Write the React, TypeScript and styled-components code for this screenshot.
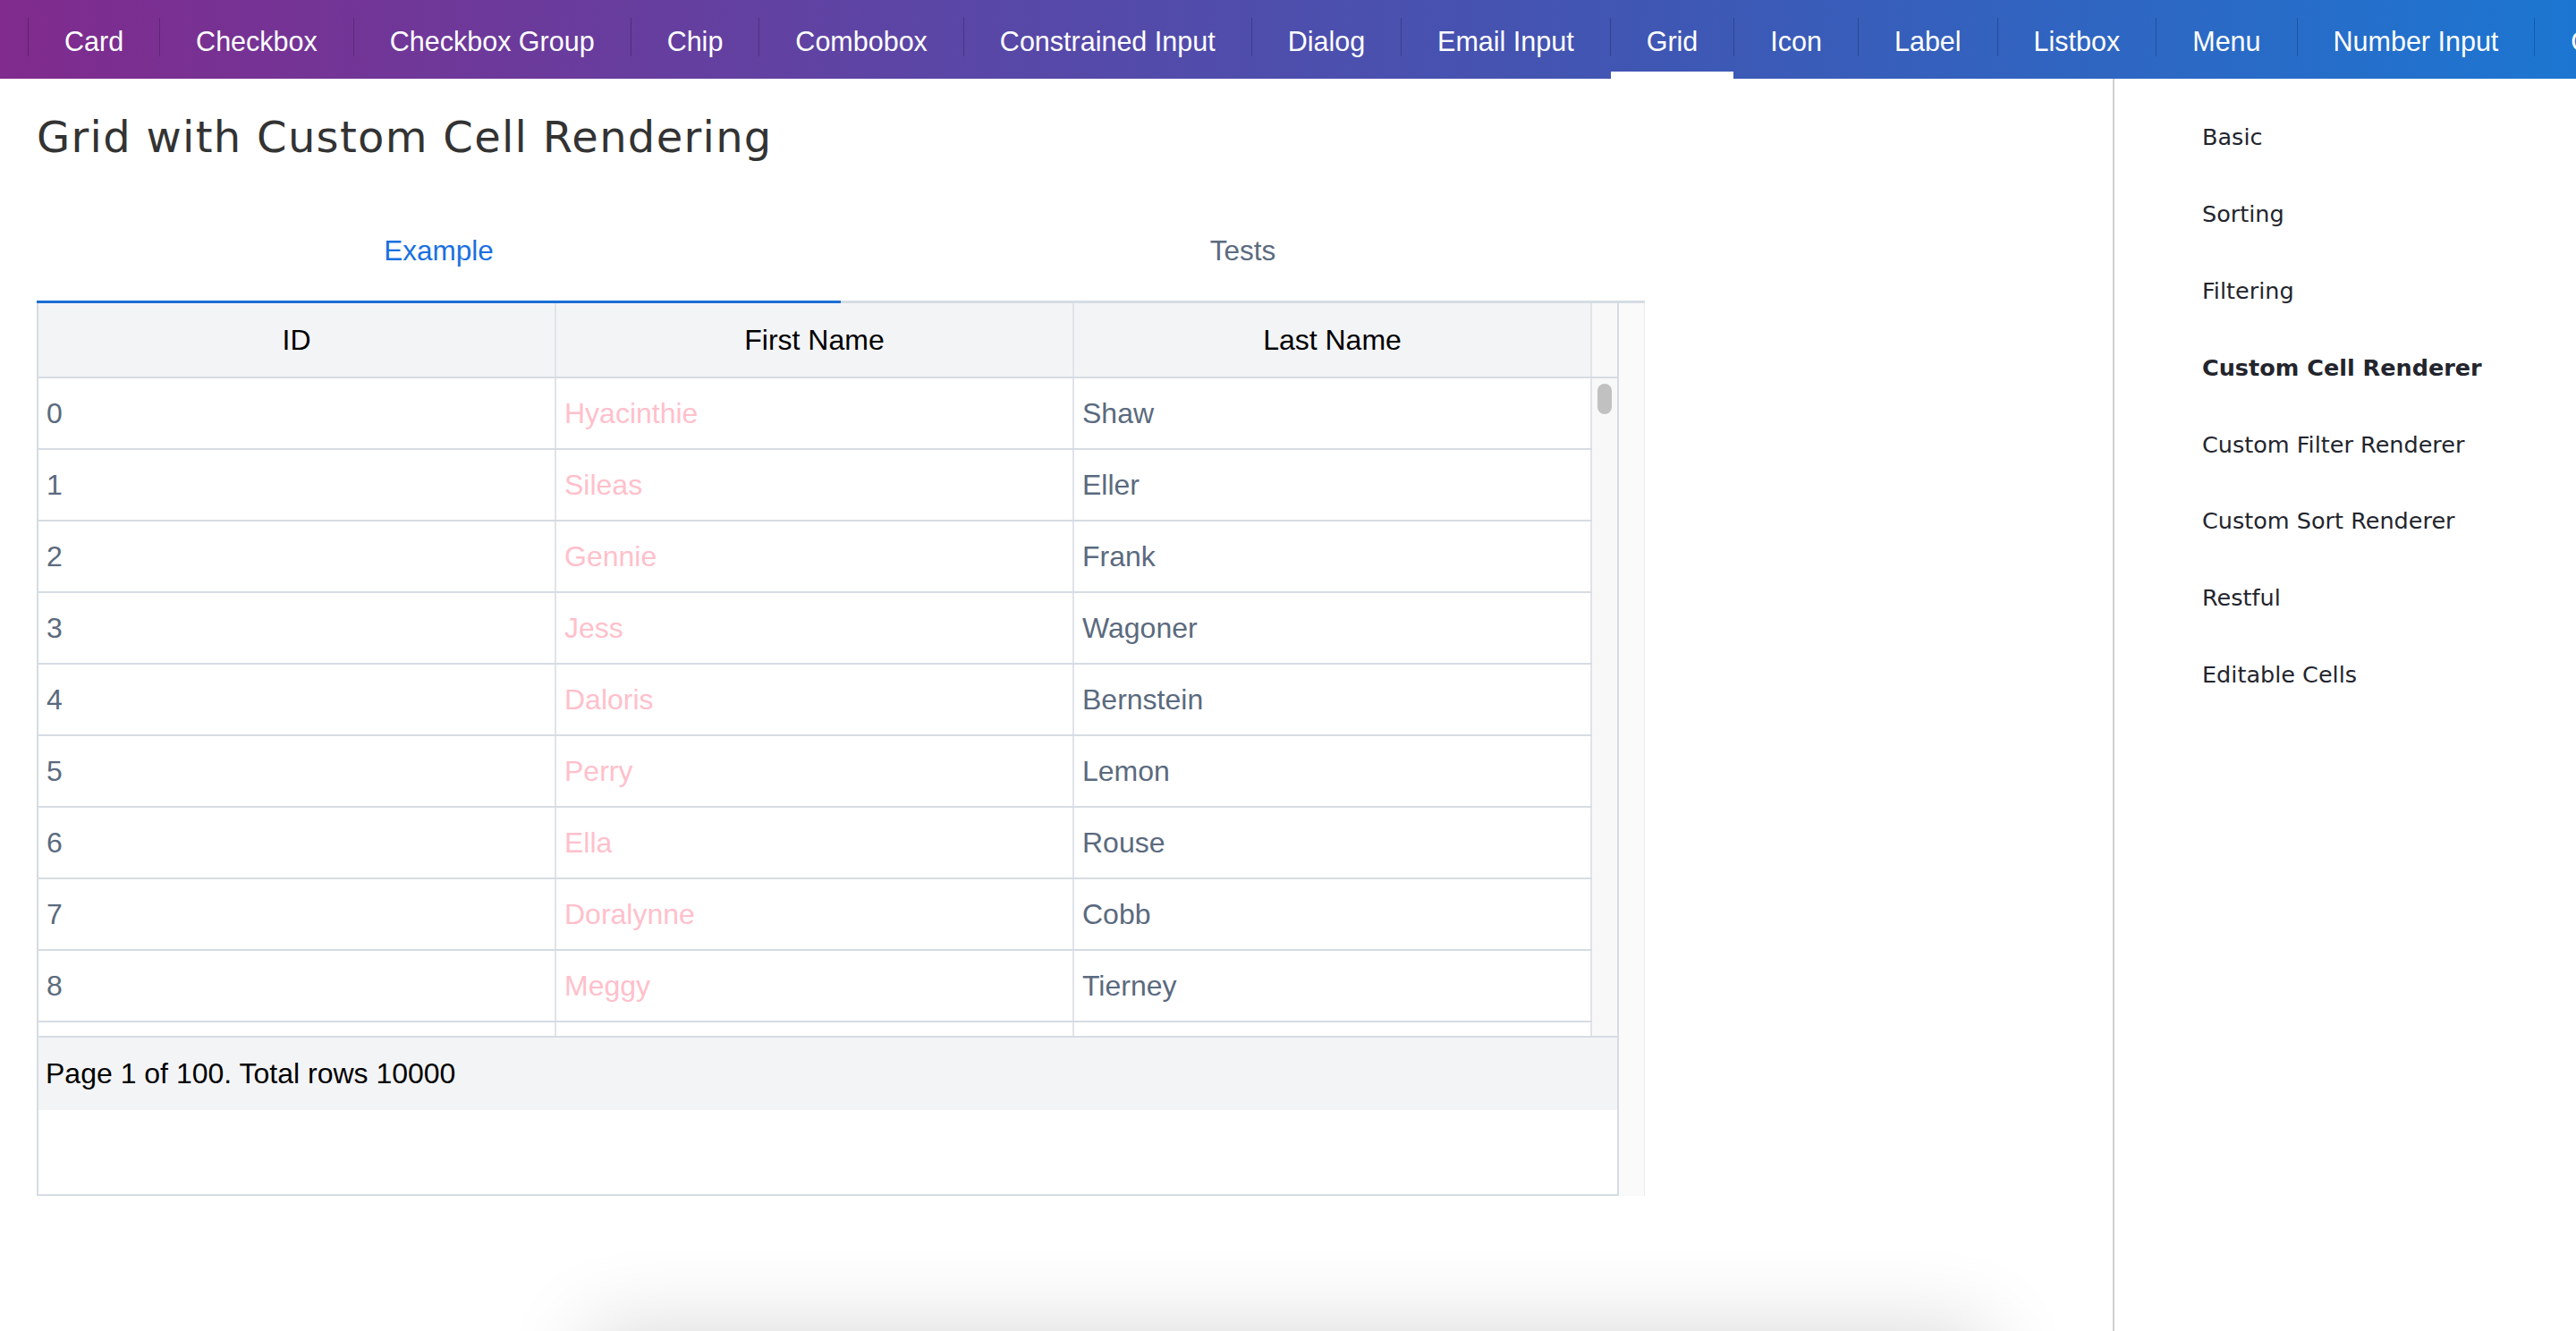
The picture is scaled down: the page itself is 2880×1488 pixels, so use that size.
import React from "react";
import styled, { createGlobalStyle } from "styled-components";

type Person = { id: number; first: string; last: string };

const navItems = [
  "Card",
  "Checkbox",
  "Checkbox Group",
  "Chip",
  "Combobox",
  "Constrained Input",
  "Dialog",
  "Email Input",
  "Grid",
  "Icon",
  "Label",
  "Listbox",
  "Menu",
  "Number Input",
  "Option",
];

const sideLinks = [
  "Basic",
  "Sorting",
  "Filtering",
  "Custom Cell Renderer",
  "Custom Filter Renderer",
  "Custom Sort Renderer",
  "Restful",
  "Editable Cells",
];

const people: Person[] = [
  { id: 0, first: "Hyacinthie", last: "Shaw" },
  { id: 1, first: "Sileas", last: "Eller" },
  { id: 2, first: "Gennie", last: "Frank" },
  { id: 3, first: "Jess", last: "Wagoner" },
  { id: 4, first: "Daloris", last: "Bernstein" },
  { id: 5, first: "Perry", last: "Lemon" },
  { id: 6, first: "Ella", last: "Rouse" },
  { id: 7, first: "Doralynne", last: "Cobb" },
  { id: 8, first: "Meggy", last: "Tierney" },
];

const App = () => {
  return (
    <>
      <GlobalStyle />
      <SPage>
        <SNav>
          {navItems.map((item) => (
            <React.Fragment key={item}>
              <SNavSep />
              <SNavItem $active={item === "Grid"}>{item}</SNavItem>
            </React.Fragment>
          ))}
        </SNav>

        <SBody>
          <SMain>
            <STitle>Grid with Custom Cell Rendering</STitle>

            <STabList>
              <STab $active>Example</STab>
              <STab>Tests</STab>
            </STabList>

            <STabPanel>
              <SGrid>
                <SHeaderRow>
                  <SHeaderCell>ID</SHeaderCell>
                  <SHeaderCell>First Name</SHeaderCell>
                  <SHeaderCell>Last Name</SHeaderCell>
                  <SHeaderGutter />
                </SHeaderRow>

                <SGridBody>
                  <SRows>
                    {people.map((p) => (
                      <SRow key={p.id}>
                        <SCell>{p.id}</SCell>
                        <SCell $pink>{p.first}</SCell>
                        <SCell>{p.last}</SCell>
                      </SRow>
                    ))}
                    {/* next row is only just scrolled into view */}
                    <SRow>
                      <SCell />
                      <SCell />
                      <SCell />
                    </SRow>
                  </SRows>
                  <STrack>
                    <SThumb />
                  </STrack>
                </SGridBody>

                <SGridFooter>Page 1 of 100. Total rows 10000</SGridFooter>
                <SGridBlank />
              </SGrid>
              <SPanelTrack />
            </STabPanel>
          </SMain>

          <SSide>
            {sideLinks.map((link) => (
              <SSideLink key={link} $current={link === "Custom Cell Renderer"}>
                {link}
              </SSideLink>
            ))}
          </SSide>
        </SBody>
      </SPage>
      <SBottomSheet />
    </>
  );
};

const GlobalStyle = createGlobalStyle`
  html, body {
    margin: 0;
    padding: 0;
    height: 100%;
    overflow: hidden;
    background: #fff;
  }
  body {
    font-family: "Liberation Sans", Arial, sans-serif;
  }
  #root {
    height: 100%;
  }
`;

const SPage = styled.div`
  height: 100vh;
  display: flex;
  flex-direction: column;
`;

const SNav = styled.nav`
  height: 88px;
  flex-shrink: 0;
  display: flex;
  align-items: center;
  padding-left: 31px;
  overflow: hidden;
  white-space: nowrap;
  background: linear-gradient(90deg, #802b8d 0%, #5c45a5 35%, #3f57b4 65%, #1c76d1 100%);
`;

const SNavSep = styled.span`
  flex-shrink: 0;
  width: 1px;
  height: 43px;
  margin-bottom: 5px;
  background: rgba(0, 0, 0, 0.22);
`;

const SNavItem = styled.a<{ $active?: boolean }>`
  flex-shrink: 0;
  height: 88px;
  box-sizing: border-box;
  display: flex;
  align-items: center;
  padding: 4px 40px 0;
  font-size: 30.5px;
  color: #fff;
  box-shadow: ${(p) => (p.$active ? "inset 0 -8px 0 #fff" : "none")};
`;

const SBody = styled.div`
  flex: 1;
  display: flex;
  min-height: 0;
`;

const SMain = styled.main`
  flex: 1;
  padding-left: 41px;
`;

const STitle = styled.h1`
  margin: 36px 0 0;
  font-family: "DejaVu Sans", sans-serif;
  font-size: 48px;
  line-height: 58px;
  font-weight: 400;
  letter-spacing: 1.3px;
  color: #333;
`;

const STabList = styled.div`
  margin-top: 43px;
  width: 1798px;
  display: grid;
  grid-template-columns: 1fr 1fr;
`;

const STab = styled.button<{ $active?: boolean }>`
  height: 114px;
  padding: 0;
  border: none;
  border-bottom: 3px solid ${(p) => (p.$active ? "#1a6fd6" : "#d6dce3")};
  background: none;
  font-family: "Liberation Sans", Arial, sans-serif;
  font-size: 31.5px;
  color: ${(p) => (p.$active ? "#1a70e0" : "#5c6b7f")};
`;

const STabPanel = styled.div`
  width: 1798px;
  display: flex;
`;

const SGrid = styled.div`
  flex: 1;
  display: flex;
  flex-direction: column;
  border: 2px solid #d6dce3;
  border-top: none;
`;

const SHeaderRow = styled.div`
  height: 82px;
  display: grid;
  grid-template-columns: repeat(3, 1fr) 28px;
  background: #f3f4f6;
  border-bottom: 2px solid #d6dce3;
`;

const SHeaderCell = styled.div`
  display: flex;
  align-items: center;
  justify-content: center;
  border-right: 2px solid #e0e4e9;
  font-size: 32px;
  color: #000;
`;

const SHeaderGutter = styled.div`
  background: #f8f8f8;
`;

const SGridBody = styled.div`
  height: 735px;
  display: flex;
  overflow: hidden;
`;

const SRows = styled.div`
  flex: 1;
  display: flex;
  flex-direction: column;
  overflow: hidden;
`;

const SRow = styled.div`
  flex-shrink: 0;
  height: 80px;
  box-sizing: border-box;
  display: grid;
  grid-template-columns: repeat(3, 1fr);
  border-bottom: 2px solid #d6dce3;
`;

const SCell = styled.div<{ $pink?: boolean }>`
  display: flex;
  align-items: center;
  padding-left: 9px;
  border-right: 2px solid #e0e4e9;
  font-size: 32px;
  color: ${(p) => (p.$pink ? "#ffc0cb" : "#5b6a7e")};
`;

const STrack = styled.div`
  width: 28px;
  flex-shrink: 0;
  background: #f8f8f8;
`;

const SThumb = styled.div`
  width: 16px;
  height: 34px;
  margin: 6px auto 0;
  border-radius: 8px;
  background: #c1c1c1;
`;

const SGridFooter = styled.div`
  height: 81px;
  display: flex;
  align-items: center;
  padding-left: 8px;
  border-top: 2px solid #d6dce3;
  background: #f3f4f6;
  font-size: 32px;
  color: #000;
`;

const SGridBlank = styled.div`
  height: 94px;
`;

const SPanelTrack = styled.div`
  width: 28px;
  flex-shrink: 0;
  background: #fafafa;
  border-right: 1px solid #ececec;
`;

const SSide = styled.aside`
  width: 518px;
  flex-shrink: 0;
  border-left: 2px solid #cfcfcf;
  padding: 22px 0 0 98px;
  box-sizing: border-box;
`;

const SSideLink = styled.a<{ $current?: boolean }>`
  display: flex;
  align-items: center;
  height: 85.9px;
  font-family: "DejaVu Sans", sans-serif;
  font-size: 25.5px;
  font-weight: ${(p) => (p.$current ? 700 : 400)};
  color: #23252d;
`;

const SBottomSheet = styled.div`
  position: fixed;
  top: 100vh;
  left: 50%;
  transform: translateX(-50%);
  width: 1562px;
  height: 300px;
  background: #fff;
  box-shadow: 0 0 90px rgba(0, 0, 0, 0.16);
`;

export default App;
